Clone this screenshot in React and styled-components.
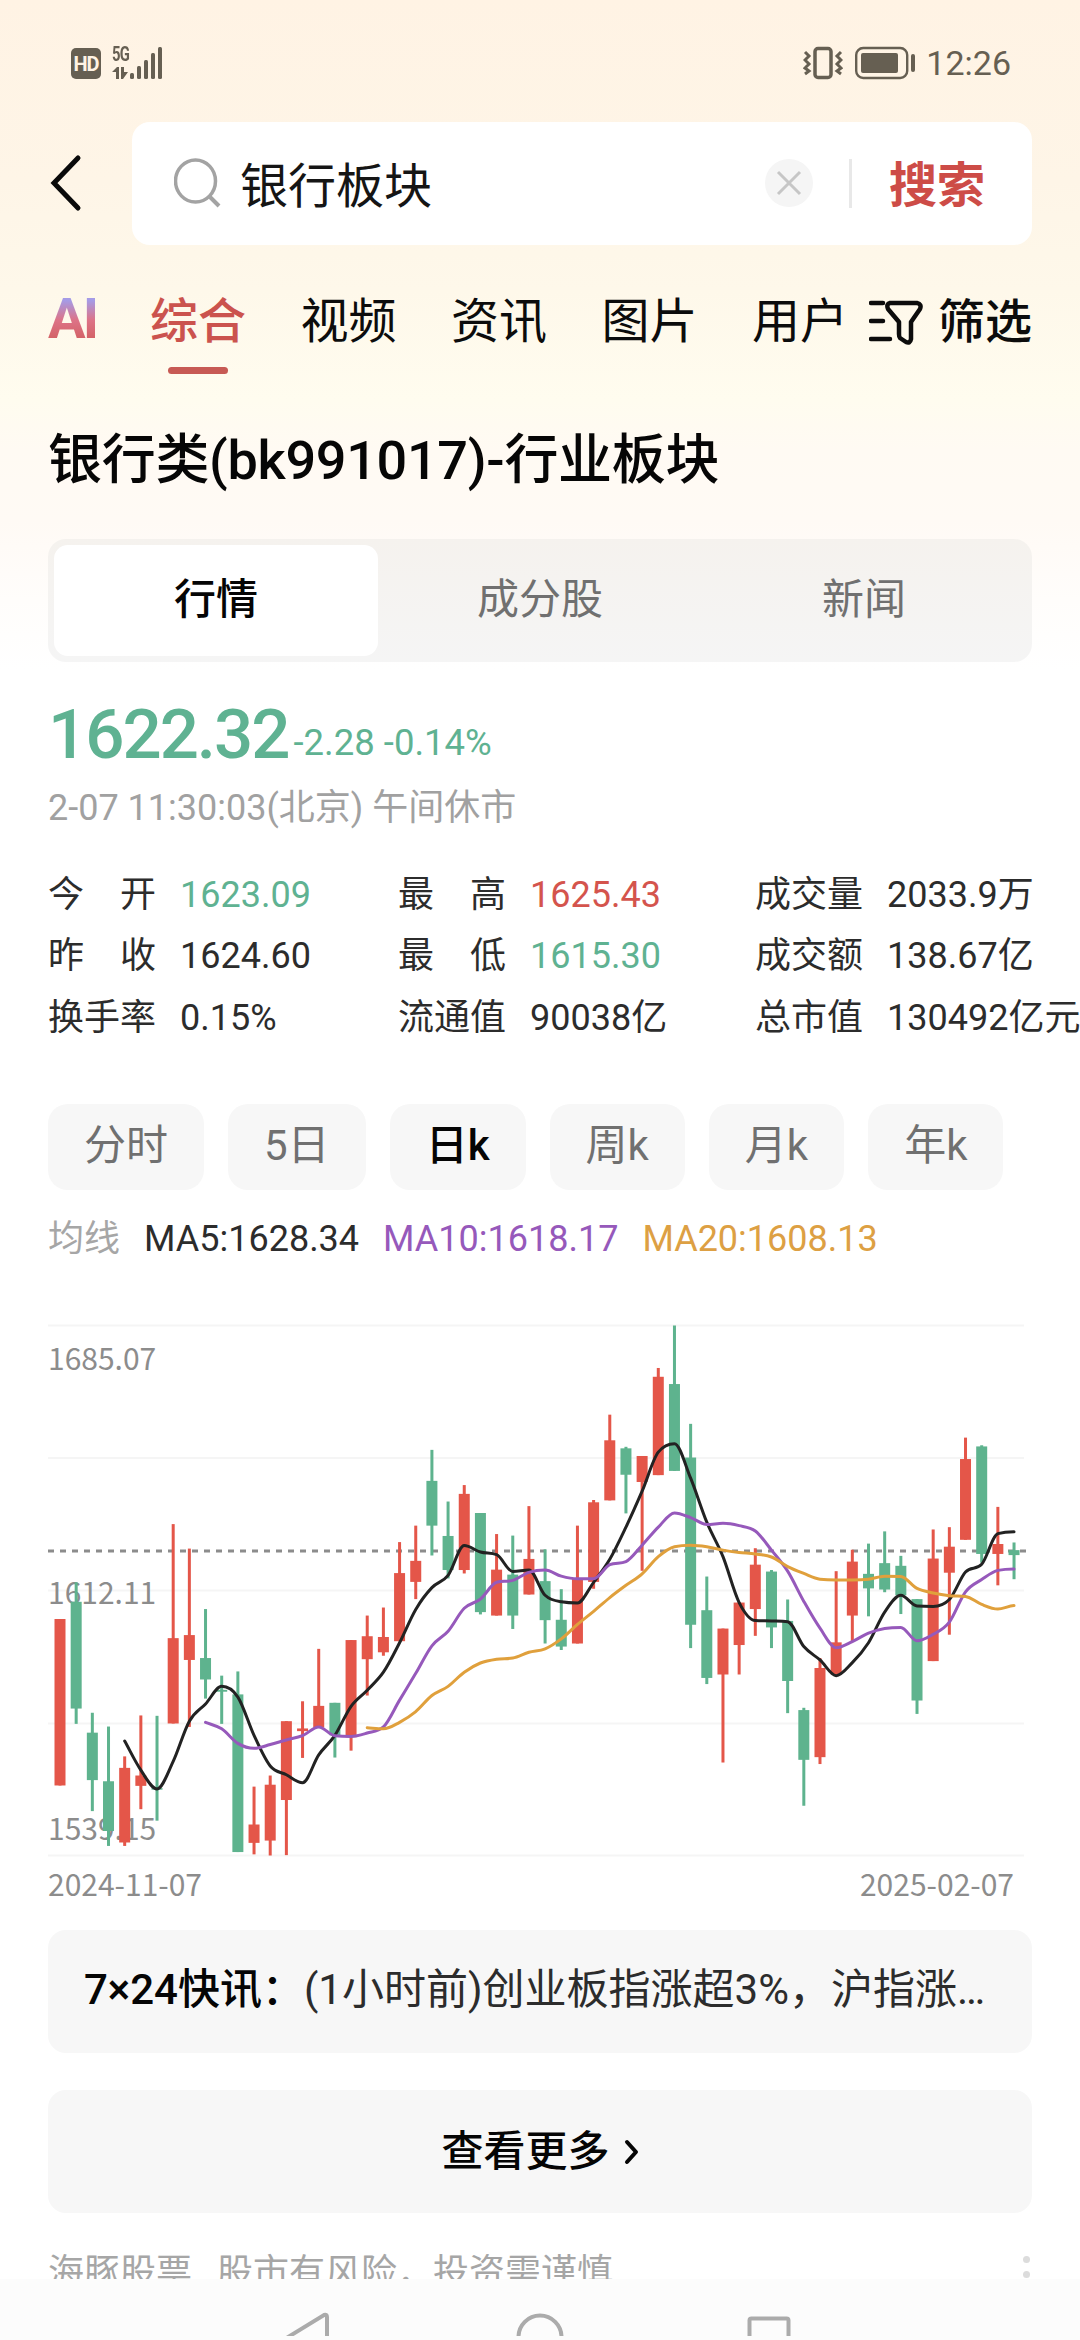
import React from 'react';
import styled, { createGlobalStyle } from 'styled-components';

const GlobalStyle = createGlobalStyle`
  * {
    box-sizing: border-box;
  }
  body {
    margin: 0;
    background: #ffffff;
  }
`;

const Page = styled.div`
  width: 1080px;
  height: 2340px;
  overflow: hidden;
  display: flex;
  flex-direction: column;
  font-family: Roboto, 'Noto Sans CJK SC', sans-serif;
  color: #2c2c2c;
  background: linear-gradient(
    180deg,
    #fff3e4 0px,
    #fef5e7 180px,
    #fef8ea 290px,
    #fffcef 400px,
    #fffaf3 450px,
    #fffaf5 520px,
    #fffdfb 600px,
    #ffffff 670px
  );
`;

const StatusBar = styled.div`
  height: 123px;
  padding: 44px 69px 0 71px;
  display: flex;
  justify-content: space-between;
  align-items: flex-start;
  color: #665f52;
`;

const StatusGroup = styled.div`
  display: flex;
  align-items: center;
  height: 38px;
  gap: ${props => props.gap}px;
`;

const HdBadge = styled.div`
  width: 30px;
  height: 31px;
  border-radius: 5px;
  background: #665f52;
  color: #fff3e4;
  font-size: 20px;
  font-weight: bold;
  line-height: 32px;
  text-align: center;
  letter-spacing: -1px;
`;

const Network = styled.div`
  display: flex;
  align-items: flex-end;
`;

const NetworkType = styled.div`
  width: 17px;
  margin-right: 1px;
  display: flex;
  flex-direction: column;
  gap: 5px;
  span {
    font-size: 20px;
    line-height: 15px;
    font-weight: bold;
    letter-spacing: -1px;
    transform: scaleX(0.74);
    transform-origin: left;
  }
`;

const Clock = styled.div`
  font-size: 34px;
  line-height: 38px;
`;

const SearchRow = styled.div`
  display: flex;
  align-items: center;
  height: 123px;
  padding: 0 48px 0 50px;
`;

const BackButton = styled.div`
  width: 82px;
  height: 60px;
`;

const SearchBox = styled.div`
  flex: 1;
  height: 123px;
  padding: 0 47px 0 42px;
  display: flex;
  align-items: center;
  border-radius: 18px;
  background: #ffffff;
`;

const Query = styled.div`
  flex: 1;
  margin-left: 18px;
  padding-top: 6px;
  font-size: 48px;
  line-height: 117px;
  color: #151515;
`;

const Divider = styled.div`
  width: 3px;
  height: 49px;
  margin: 0 37px 0 36px;
  background: #e8e8e8;
`;

const SearchAction = styled.div`
  padding-top: 5px;
  font-size: 48px;
  font-weight: 700;
  line-height: 117px;
  color: #cd4c47;
`;

const TabBar = styled.div`
  height: 155px;
  padding: 45px 48px 0;
  display: flex;
  align-items: flex-start;
`;

const AiTab = styled.div`
  width: 102px;
  font-size: 56px;
  font-weight: 700;
  line-height: 58px;
  letter-spacing: -3px;
  color: transparent;
  background: linear-gradient(180deg, #a59be6 18%, #dd7387 52%, #d46368 82%);
  background-clip: text;
  -webkit-background-clip: text;
`;

const Tab = styled.div`
  width: ${props => props.width || 150.5}px;
  font-size: 48px;
  line-height: 64px;
  font-weight: ${props => (props.active ? 500 : 400)};
  color: ${props => (props.active ? '#cb534e' : '#0c0c0c')};
  &::after {
    content: '';
    display: block;
    width: 60px;
    height: 7px;
    margin: 13px 0 0 18px;
    border-radius: 4px;
    background: ${props => (props.active ? '#c75a54' : 'transparent')};
  }
`;

const Filter = styled.div`
  display: flex;
  align-items: center;
  gap: 15px;
  margin-left: auto;
  font-size: 47px;
  line-height: 64px;
  font-weight: 500;
  color: #0c0c0c;
`;

const Content = styled.div`
  padding: 0 48px;
`;

const Title = styled.h1`
  margin: 0;
  padding-top: 31px;
  height: 141px;
  font-size: 54px;
  line-height: 64px;
  font-weight: 500;
  letter-spacing: -0.3px;
  color: #060606;
`;

const Segments = styled.div`
  display: flex;
  height: 123px;
  padding: 6px;
  border-radius: 18px;
  background: linear-gradient(180deg, #f5f2ee, #f5f5f5);
`;

const Segment = styled.div`
  flex: 1;
  text-align: center;
  font-size: 42px;
  line-height: 109px;
  border-radius: 14px;
  font-weight: ${props => (props.active ? 500 : 400)};
  color: ${props => (props.active ? '#050505' : '#707070')};
  background: ${props => (props.active ? '#ffffff' : 'transparent')};
`;

const Price = styled.div`
  display: flex;
  align-items: baseline;
  height: 82px;
  margin-top: 34px;
  color: #5fb292;
  font-size: 36.5px;
  line-height: 78px;
  strong {
    margin-right: 5px;
    font-size: 69px;
    font-weight: 500;
    letter-spacing: -2px;
  }
  span {
    position: relative;
    top: -3px;
  }
`;

const Time = styled.div`
  height: 87px;
  font-size: 36px;
  line-height: 60px;
  color: #a1a1a1;
`;

const Stats = styled.div`
  display: grid;
  grid-template-columns: 350px 357px auto;
  grid-auto-rows: 61.5px;
  width: 1040px;
  font-size: 36px;
  line-height: 61.5px;
  white-space: nowrap;
`;

const Stat = styled.div`
  display: flex;
  gap: 24px;
`;

const StatLabel = styled.div`
  width: 108px;
  display: flex;
  justify-content: space-between;
`;

const StatValue = styled.div`
  color: ${props => props.color || '#2c2c2c'};
`;

const Periods = styled.div`
  display: flex;
  gap: 24px;
  margin-top: 55px;
`;

const Period = styled.div`
  height: 86px;
  padding: 0 36px;
  border-radius: 20px;
  background: #f7f7f7;
  font-size: 42px;
  line-height: 84px;
  font-weight: ${props => (props.active ? 500 : 400)};
  color: ${props => (props.active ? '#050505' : '#707070')};
`;

const Legend = styled.div`
  display: flex;
  gap: 24px;
  height: 97px;
  margin-top: 19px;
  font-size: 36px;
  line-height: 60px;
`;

const LegendItem = styled.span`
  color: ${props => props.color};
`;

const ChartSvg = styled.svg`
  display: block;
  overflow: visible;
  text {
    font-family: 'Noto Sans CJK SC', sans-serif;
    font-size: 30px;
    fill: #8c8c8c;
  }
`;

const Dates = styled.div`
  display: flex;
  justify-content: space-between;
  height: 67px;
  padding-right: 18px;
  font-family: 'Noto Sans CJK SC', sans-serif;
  font-size: 30px;
  line-height: 40px;
  color: #8c8c8c;
`;

const News = styled.div`
  height: 123px;
  padding: 0 36px;
  border-radius: 18px;
  background: #f7f7f7;
  font-size: 42px;
  line-height: 119px;
  white-space: nowrap;
  overflow: hidden;
  text-overflow: ellipsis;
  b {
    font-weight: 500;
    color: #050505;
  }
`;

const More = styled.div`
  display: flex;
  justify-content: center;
  align-items: center;
  gap: 13px;
  height: 123px;
  margin-top: 37px;
  border-radius: 18px;
  background: #f7f7f7;
  font-size: 42px;
  font-weight: 500;
  line-height: 119px;
  color: #050505;
`;

const Disclaimer = styled.div`
  display: flex;
  gap: 25px;
  height: 66px;
  padding-top: 30px;
  overflow: hidden;
  font-size: 36px;
  line-height: 60px;
  color: #a6a6a6;
`;

const DotsIcon = styled.svg`
  margin: 12px 2px 0 auto;
`;

const NavBar = styled.div`
  flex: 1;
  background: #fcfcfc;
`;

const GREEN = '#5eb38e';
const RED = '#e45649';

const tabs = ['综合', '视频', '资讯', '图片'];

const stats = [
  ['今开', '1623.09', '#5fb292'],
  ['最高', '1625.43', '#d4544d'],
  ['成交量', '2033.9万'],
  ['昨收', '1624.60'],
  ['最低', '1615.30', '#5fb292'],
  ['成交额', '138.67亿'],
  ['换手率', '0.15%'],
  ['流通值', '90038亿'],
  ['总市值', '130492亿元'],
];

const periods = ['分时', '5日', '日k', '周k', '月k', '年k'];

// direction, high, body top, body bottom, low - distances from the top of the plot
const candles = [
  ['r', 818, 818, 1253, 1253],
  ['g', 722, 773, 1052, 1092],
  ['g', 1063, 1115, 1239, 1320],
  ['g', 1099, 1242, 1372, 1411],
  ['r', 1177, 1207, 1402, 1411],
  ['r', 1070, 1227, 1254, 1315],
  ['g', 1071, 1260, 1264, 1345],
  ['r', 570, 868, 1091, 1091],
  ['r', 634, 860, 925, 1100],
  ['g', 792, 920, 976, 1026],
  ['g', 966, 1003, 1008, 1092],
  ['g', 955, 1015, 1427, 1427],
  ['r', 1256, 1355, 1403, 1433],
  ['r', 1227, 1251, 1397, 1436],
  ['r', 1085, 1085, 1291, 1435],
  ['r', 1033, 1104, 1111, 1181],
  ['r', 896, 1045, 1102, 1102],
  ['g', 1037, 1037, 1122, 1180],
  ['r', 873, 873, 1127, 1162],
  ['r', 809, 863, 923, 1018],
  ['r', 788, 865, 905, 914],
  ['r', 617, 698, 876, 876],
  ['r', 574, 666, 721, 766],
  ['g', 376, 457, 574, 652],
  ['g', 511, 601, 690, 712],
  ['r', 468, 491, 690, 699],
  ['g', 541, 541, 800, 806],
  ['r', 596, 689, 809, 809],
  ['g', 600, 702, 809, 844],
  ['r', 523, 661, 754, 754],
  ['g', 636, 719, 821, 882],
  ['g', 740, 820, 890, 899],
  ['r', 574, 712, 882, 882],
  ['r', 507, 513, 721, 739],
  ['r', 284, 351, 508, 508],
  ['g', 368, 372, 441, 542],
  ['r', 392, 392, 460, 692],
  ['r', 162, 185, 442, 442],
  ['g', 51, 204, 431, 431],
  ['g', 308, 396, 833, 894],
  ['g', 707, 795, 972, 988],
  ['r', 843, 843, 963, 1193],
  ['r', 774, 775, 886, 963],
  ['r', 633, 676, 792, 862],
  ['g', 690, 694, 840, 894],
  ['g', 767, 823, 980, 1064],
  ['g', 1050, 1056, 1186, 1306],
  ['r', 920, 946, 1179, 1197],
  ['r', 693, 879, 963, 963],
  ['r', 637, 668, 809, 877],
  ['g', 621, 700, 738, 811],
  ['g', 589, 672, 741, 748],
  ['g', 653, 679, 756, 805],
  ['g', 766, 766, 1031, 1066],
  ['r', 584, 660, 928, 928],
  ['r', 578, 629, 697, 859],
  ['r', 344, 400, 611, 611],
  ['g', 364, 367, 648, 671],
  ['r', 525, 622, 648, 730],
  ['g', 618, 638, 651, 714],
];

const averages = [
  {
    color: '#222222',
    start: 4,
    values: [
      1137, 1213, 1262, 1190, 1085, 1040, 994, 1022, 1122, 1202, 1225, 1246,
      1173, 1122, 1046, 1004, 957, 880, 793, 736, 704, 626, 643, 650, 694,
      690, 756, 773, 776, 722, 662, 578, 484, 382, 360, 450, 565, 655, 775,
      822, 823, 825, 890, 925, 966, 932, 880, 800, 756, 784, 785, 767, 695,
      675, 595, 590,
    ],
  },
  {
    color: '#9659bb',
    start: 9,
    values: [
      1088, 1105, 1143, 1156, 1146, 1134, 1123, 1100, 1123, 1125, 1116, 1100,
      1030, 960, 888, 850, 790, 766, 722, 717, 696, 690, 706, 713, 713, 676,
      668, 625, 578, 541, 553, 571, 568, 574, 588, 638, 693, 772, 842, 893,
      877, 855, 843, 840, 875, 858, 826, 747, 715, 691, 687,
    ],
  },
  {
    color: '#e0a03c',
    start: 19,
    values: [
      1102, 1105, 1088, 1060, 1018, 994, 957, 933, 923, 920, 905, 896, 870,
      832, 798, 762, 730, 700, 655, 629, 625, 629, 638, 644, 648, 656, 681,
      699, 714, 716, 716, 714, 706, 707, 738, 750, 757, 759, 780, 792, 783,
    ],
  },
];

const STEP = 16.17;
const getX = i => 12 + i * STEP;
const getY = v => 19.5 + ((v - 51) * 530) / 1385;

// Cubic path that stays flat at every local extreme
const smoothPath = (start, values) => {
  const ys = values.map(getY);
  const slopes = ys.map((y, i) => {
    if (i === 0 || i === ys.length - 1) return 0;
    const before = y - ys[i - 1];
    const after = ys[i + 1] - y;
    if (before * after <= 0) return 0;
    const limit = 2.4 * Math.min(Math.abs(before), Math.abs(after));
    const mean = (before + after) / 2;
    return Math.sign(mean) * Math.min(Math.abs(mean), limit);
  });
  slopes[0] = ys[1] - ys[0];
  return ys.reduce((d, y, i) => {
    const x = getX(start + i);
    if (i === 0) return `M${x} ${y}`;
    const third = STEP / 3;
    return `${d} C${x - STEP + third} ${ys[i - 1] + slopes[i - 1] / 3} ${x -
      third} ${y - slopes[i] / 3} ${x} ${y}`;
  }, '');
};

const Chart = () => (
  <ChartSvg width="984" height="557">
    {[19.5, 152, 284.5, 417.5, 549.5].map(y => (
      <line key={y} x1="0" x2="976" y1={y} y2={y} stroke="#f5f5f5" strokeWidth="2" />
    ))}
    <line
      x1="0"
      x2="978"
      y1="245"
      y2="245"
      stroke="#8c8c8c"
      strokeWidth="3"
      strokeDasharray="6 6"
    />
    <text x="0" y="64">1685.07</text>
    <text x="0" y="298">1612.11</text>
    <text x="0" y="534">1539.15</text>
    {candles.map(([dir, high, top, bottom, low], i) => {
      const fill = dir === 'r' ? RED : GREEN;
      return (
        <g key={i} fill={fill}>
          <rect
            x={getX(i) - 1.5}
            y={getY(high)}
            width="3"
            height={getY(low) - getY(high)}
          />
          <rect
            x={getX(i) - 5.5}
            y={getY(top)}
            width="11"
            height={getY(bottom) - getY(top)}
          />
        </g>
      );
    })}
    {averages.map(line => (
      <path
        key={line.color}
        d={smoothPath(line.start, line.values)}
        fill="none"
        stroke={line.color}
        strokeWidth="3"
        strokeLinecap="round"
      />
    ))}
  </ChartSvg>
);

const SignalIcon = () => (
  <svg width="32" height="32" fill="currentColor">
    <rect x="0" y="26" width="4" height="6" rx="1.5" />
    <rect x="7" y="19" width="4" height="13" rx="1.5" />
    <rect x="14" y="13" width="4" height="19" rx="1.5" />
    <rect x="21" y="6" width="4" height="26" rx="1.5" />
    <rect x="28" y="0" width="4" height="32" rx="1.5" />
  </svg>
);

const DataArrows = () => (
  <svg width="17" height="12" fill="currentColor">
    <path d="M0 5 L5 0 H7 V12 H4 V5 Z" />
    <path d="M9 0 H12 V5 H16 L11 12 H9 Z" />
  </svg>
);

const VibrateIcon = () => (
  <svg width="40" height="34" fill="none" stroke="currentColor">
    <rect x="12" y="2.5" width="16" height="29" rx="3" strokeWidth="3.5" />
    <path
      d="M2 6 L6 10 L2 14 L6 18 L2 22 L6 25 L2 28 M38 6 L34 10 L38 14 L34 18 L38 22 L34 25 L38 28"
      strokeWidth="3"
    />
  </svg>
);

const BatteryIcon = () => (
  <svg width="60" height="34" fill="none">
    <rect x="1.2" y="2" width="51" height="30" rx="7" stroke="currentColor" strokeWidth="2.4" />
    <rect x="6" y="7" width="37" height="20" rx="2" fill="currentColor" />
    <rect x="56" y="8" width="4" height="18" rx="2" fill="currentColor" />
  </svg>
);

class App extends React.Component {
  render() {
    return (
      <Page>
        <GlobalStyle />
        <StatusBar>
          <StatusGroup gap={11}>
            <HdBadge>HD</HdBadge>
            <Network>
              <NetworkType>
                <span>5G</span>
                <DataArrows />
              </NetworkType>
              <SignalIcon />
            </Network>
          </StatusGroup>
          <StatusGroup gap={11.5}>
            <VibrateIcon />
            <BatteryIcon />
            <Clock>12:26</Clock>
          </StatusGroup>
        </StatusBar>
        <SearchRow>
          <BackButton>
            <svg width="32" height="60" fill="none" stroke="#0a0a0a" strokeWidth="5">
              <path d="M28 5 L4 30 L28 55" strokeLinecap="round" />
            </svg>
          </BackButton>
          <SearchBox>
            <svg width="48" height="50" fill="none" stroke="#a3a3a3" strokeWidth="3.5">
              <ellipse cx="21.5" cy="23" rx="20" ry="21" />
              <path d="M35 38 L45 48" strokeWidth="4" />
            </svg>
            <Query>银行板块</Query>
            <svg width="48" height="48">
              <circle cx="24" cy="24" r="24" fill="#f5f5f5" />
              <path d="M13 13 L35 35 M35 13 L13 35" stroke="#c6c6c6" strokeWidth="3" />
            </svg>
            <Divider />
            <SearchAction>搜索</SearchAction>
          </SearchBox>
        </SearchRow>
        <TabBar>
          <AiTab>AI</AiTab>
          {tabs.map((tab, i) => (
            <Tab key={tab} active={i === 0}>
              {tab}
            </Tab>
          ))}
          <Tab width={96}>用户</Tab>
          <Filter>
            <svg width="54" height="46" fill="none" stroke="#0c0c0c" strokeWidth="4.5">
              <path d="M2 4 H14 M2 22 H14 M2 40 H21" strokeLinecap="round" />
              <path
                d="M21 4 H48 Q53 5 51 10 L42 23 V40 Q41 45 37 43 L31 39 Q30 38 30 35 V23 L19 10 Q17 5 21 4 Z"
                strokeLinejoin="round"
              />
            </svg>
            筛选
          </Filter>
        </TabBar>
        <Content>
          <Title>银行类(bk991017)-行业板块</Title>
          <Segments>
            <Segment active>行情</Segment>
            <Segment>成分股</Segment>
            <Segment>新闻</Segment>
          </Segments>
          <Price>
            <strong>1622.32</strong>
            <span>-2.28 -0.14%</span>
          </Price>
          <Time>2-07 11:30:03(北京) 午间休市</Time>
          <Stats>
            {stats.map(([label, value, color]) => (
              <Stat key={label}>
                <StatLabel>
                  {label.split('').map(char => (
                    <span key={char}>{char}</span>
                  ))}
                </StatLabel>
                <StatValue color={color}>{value}</StatValue>
              </Stat>
            ))}
          </Stats>
          <Periods>
            {periods.map(period => (
              <Period key={period} active={period === '日k'}>
                {period}
              </Period>
            ))}
          </Periods>
          <Legend>
            <LegendItem color="#a6a6a6">均线</LegendItem>
            <LegendItem color="#2c2c2c">MA5:1628.34</LegendItem>
            <LegendItem color="#9659bb">MA10:1618.17</LegendItem>
            <LegendItem color="#dda043">MA20:1608.13</LegendItem>
          </Legend>
          <Chart />
          <Dates>
            <span>2024-11-07</span>
            <span>2025-02-07</span>
          </Dates>
          <News>
            <b>7×24快讯：</b>
            (1小时前)创业板指涨超3%，沪指涨超1%
          </News>
          <More>
            查看更多
            <svg width="16" height="26" fill="none" stroke="#050505" strokeWidth="4">
              <path d="M4 3 L13 13 L4 23" strokeLinecap="round" strokeLinejoin="round" />
            </svg>
          </More>
          <Disclaimer>
            <span>海豚股票</span>
            <span>股市有风险，投资需谨慎</span>
            <DotsIcon width="7" height="40" fill="#dcdcdc">
              <circle cx="3.5" cy="4.5" r="3.5" />
              <circle cx="3.5" cy="19.5" r="3.5" />
              <circle cx="3.5" cy="34.5" r="3.5" />
            </DotsIcon>
          </Disclaimer>
        </Content>
        <NavBar>
          <svg width="1080" height="57" fill="none" stroke="#ababab" strokeWidth="4">
            <path d="M280 63 L324 36 Q327 35 327 38 V90" />
            <circle cx="540" cy="58" r="21.5" />
            <rect x="749.5" y="39.5" width="39" height="40" rx="2" />
          </svg>
        </NavBar>
      </Page>
    );
  }
}

export default App;
